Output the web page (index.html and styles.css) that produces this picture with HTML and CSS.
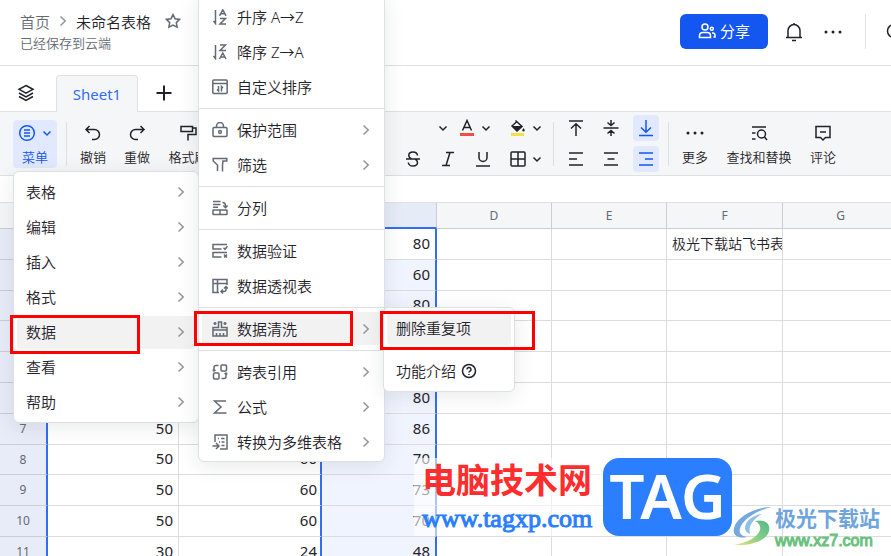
FILE: index.html
```
<!DOCTYPE html>
<html lang="zh-CN">
<head>
    <meta charset="UTF-8">
    <meta name="viewport" content="width=device-width, initial-scale=1.0">
    <title>未命名表格</title>
    <link rel="stylesheet" href="styles.css">
</head>
<body>
    <!-- Shared icons -->
    <svg class="sprite" aria-hidden="true">
        <symbol id="chevron" viewBox="0 0 8 14"><path d="M1.5 2.5 6.2 7l-4.7 4.5"/></symbol>
        <symbol id="caret" viewBox="0 0 12 12"><path d="M2.5 4.5 6 8l3.5-3.5"/></symbol>
    </svg>

    <header class="header">
        <div class="doc">
            <nav class="crumbs">
                <a href="#">首页</a>
                <svg class="chevron" width="8" height="14"><use href="#chevron"/></svg>
                <span class="doc-name">未命名表格</span>
                <button class="plain star" aria-label="收藏">
                    <svg width="16" height="16" viewBox="0 0 16 16"><path d="m8 1.6 2 4.1 4.6.7-3.3 3.2.8 4.5L8 12l-4.1 2.1.8-4.5L1.4 6.4 6 5.7z"/></svg>
                </button>
            </nav>
            <div class="saved">已经保存到云端</div>
        </div>
        <div class="header-actions">
            <button class="share">
                <svg width="18" height="18" viewBox="0 0 18 18"><circle cx="7" cy="5" r="3"/><path d="M1.5 15.5v-1.7c0-2.2 1.5-3.3 3.3-3.3h4.4c1.8 0 3.3 1.1 3.3 3.3v1.7z"/><circle cx="13.8" cy="6.8" r="1.5"/><path d="M14 11h.8c1.4 0 2.2.9 2.2 2.2V15h-1.5"/></svg>
                分享
            </button>
            <button class="plain bell" aria-label="通知">
                <svg width="18" height="20" viewBox="0 0 18 20"><path d="M3 15.5V8.6a6 6 0 0 1 12 0v6.9M1 15.5h16M7 18.5h4M9 2.500V1"/></svg>
            </button>
            <button class="plain dots" aria-label="更多操作">
                <svg class="solid" width="18" height="4" viewBox="0 0 18 4"><circle cx="2" cy="2" r="1.5"/><circle cx="9" cy="2" r="1.5"/><circle cx="16" cy="2" r="1.5"/></svg>
            </button>
            <span class="divider"></span>
            <button class="plain search" aria-label="搜索">
                <svg width="18" height="18" viewBox="0 0 18 18"><circle cx="8" cy="8" r="6.5"/><path d="m13 13 4 4"/></svg>
            </button>
        </div>
    </header>

    <div class="tabs">
        <button class="plain" aria-label="工作表列表">
            <svg width="18" height="18" viewBox="0 0 18 18"><path d="m9 1.500 7 3.800-7 3.800-7-3.800zM2 9l7 3.900L16 9M2 12.500l7 3.900 7-3.900"/></svg>
        </button>
        <button class="tab">Sheet1</button>
        <button class="plain" aria-label="新建工作表">
            <svg class="bold" width="16" height="16" viewBox="0 0 16 16"><path d="M8 .5v15M.5 8h15"/></svg>
        </button>
    </div>

    <div class="toolbar">
        <button class="tool active menu-btn">
            <span class="tool-icon">
                <svg width="18" height="18" viewBox="0 0 18 18"><circle cx="9" cy="9" r="7.300"/><path d="M6 6h6M6 9h6M6 12h6"/></svg>
                <svg width="12" height="12"><use href="#caret"/></svg>
            </span>
            菜单
        </button>
        <span class="divider"></span>
        <button class="tool">
            <span class="tool-icon"><svg width="18" height="18" viewBox="0 0 18 18"><path d="M5.500 2 2 5.500 5.500 9M2.300 5.500h8.200a5 5 0 0 1 0 10H8"/></svg></span>
            撤销
        </button>
        <button class="tool">
            <span class="tool-icon"><svg width="18" height="18" viewBox="0 0 18 18"><path d="M12.500 2 16 5.500 12.500 9M15.700 5.500H7.500a5 5 0 0 0 0 10H10"/></svg></span>
            重做
        </button>
        <button class="tool painter">
            <span class="tool-icon"><svg width="18" height="18" viewBox="0 0 18 18"><path d="M2 2.500h11.500v5H2zM13.500 4H17v6.500H9v6"/></svg></span>
            格式刷
        </button>

        <div class="format">
            <div class="format-row">
                <button class="plain end-small" aria-label="字号"><svg width="12" height="12"><use href="#caret"/></svg></button>
                <button class="plain" aria-label="文字颜色"><svg width="18" height="18" viewBox="0 0 18 18"><path d="M4.500 11.500 9 1.500l4.500 10M6 8.500h6"/><path class="red-line" d="M2 15.500h14"/></svg></button>
                <button class="plain end-wide" aria-label="选择文字颜色"><svg width="12" height="12"><use href="#caret"/></svg></button>
                <button class="plain" aria-label="填充颜色"><svg width="18" height="18" viewBox="0 0 18 18"><path d="m6.500 1.500 6.500 6-5 4.500-5-5 4.500-4"/><path class="ink" d="M3 7h10l-5 5zM14.500 9c1.800 2.500 1.500 3.500 0 3.500s-1.800-1 0-3.500z"/><path class="yellow-line" d="M2 15.500h13"/></svg></button>
                <button class="plain" aria-label="选择填充颜色"><svg width="12" height="12"><use href="#caret"/></svg></button>
            </div>
            <div class="format-row">
                <button class="plain end-wide" aria-label="删除线"><svg width="18" height="18" viewBox="0 0 18 18"><path d="M13.500 5.500C13.200 3.300 11.500 2 9 2 6.500 2 4.800 3.400 4.800 5.300c0 1.700.9 2.800 2.700 3.700M4.300 12.500C4.600 14.700 6.400 16 9 16c2.700 0 4.500-1.400 4.500-3.400 0-1.700-.8-2.800-2.500-3.600M2 9h14"/></svg></button>
                <button class="plain end-wide" aria-label="斜体"><svg width="18" height="18" viewBox="0 0 18 18"><path d="M7 2.500h8M3 15.500h8M11 2.500l-4 13"/></svg></button>
                <button class="plain end-wide" aria-label="下划线"><svg width="18" height="18" viewBox="0 0 18 18"><path d="M5 2v5.500a4 4 0 0 0 8 0V2M2 16h14"/></svg></button>
                <button class="plain" aria-label="边框"><svg width="18" height="18" viewBox="0 0 18 18"><rect x="2" y="2" width="14" height="14" rx="1"/><path d="M9 2v14M2 9h14"/></svg></button>
                <button class="plain" aria-label="选择边框"><svg width="12" height="12"><use href="#caret"/></svg></button>
            </div>
        </div>
        <span class="divider"></span>
        <div class="align">
            <button class="plain" aria-label="顶部对齐"><svg width="18" height="18" viewBox="0 0 18 18"><path d="M2 2h14M9 17V5M4 9.500 9 4.700l5 4.800"/></svg></button>
            <button class="plain" aria-label="垂直居中"><svg width="18" height="18" viewBox="0 0 18 18"><path d="M1.500 9h15M9 1v5M5.500 3.500 9 6.500l3.500-3M9 17v-5M5.500 14.500l3.500-3 3.500 3"/></svg></button>
            <button class="plain active" aria-label="底部对齐"><svg width="18" height="18" viewBox="0 0 18 18"><path d="M2 16.500h14M9 1v12M4 8.500l5 4.800 5-4.800"/></svg></button>
            <button class="plain" aria-label="左对齐"><svg width="18" height="18" viewBox="0 0 18 18"><path d="M2 3h14M2 9h8M2 15h14"/></svg></button>
            <button class="plain" aria-label="水平居中"><svg width="18" height="18" viewBox="0 0 18 18"><path d="M2 3h14M5.500 9h7M2 15h14"/></svg></button>
            <button class="plain active" aria-label="右对齐"><svg width="18" height="18" viewBox="0 0 18 18"><path d="M2 3h14M8 9h8M2 15h14"/></svg></button>
        </div>
        <span class="divider"></span>
        <button class="tool">
            <span class="tool-icon"><svg class="solid" width="18" height="18" viewBox="0 0 18 18"><circle cx="2" cy="9" r="1.5"/><circle cx="9" cy="9" r="1.5"/><circle cx="16" cy="9" r="1.5"/></svg></span>
            更多
        </button>
        <button class="tool wide">
            <span class="tool-icon"><svg width="18" height="18" viewBox="0 0 18 18"><path d="M2 3h14M2 9h3.500M2 15h3.500"/><circle cx="11.500" cy="10" r="4"/><path d="m14.500 13 2.500 3"/></svg></span>
            查找和替换
        </button>
        <button class="tool">
            <span class="tool-icon"><svg width="18" height="18" viewBox="0 0 18 18"><path d="M2 2.500h14v11h-4.500L9 16l-2.500-2.500H2zM6 8h6"/></svg></span>
            评论
        </button>
    </div>
    <div class="formula-bar"></div>

    <main class="grid">
        <table class="sheet">
            <colgroup>
                <col class="col-index"><col class="col-a"><col class="col-b">
                <col class="col-c"><col class="col-c"><col class="col-c">
                <col class="col-f"><col class="col-f">
            </colgroup>
            <thead>
                <tr><th></th><th>A</th><th>B</th><th>C</th><th>D</th><th>E</th><th>F</th><th>G</th></tr>
            </thead>
            <tbody>
                <tr><th>1</th><td>50</td><td>60</td><td>80</td><td></td><td></td><td class="text">极光下载站飞书表格</td><td></td></tr>
                <tr><th>2</th><td>50</td><td>60</td><td>60</td><td></td><td></td><td></td><td></td></tr>
                <tr><th>3</th><td>50</td><td>60</td><td>80</td><td></td><td></td><td></td><td></td></tr>
                <tr><th>4</th><td>50</td><td>60</td><td>80</td><td></td><td></td><td></td><td></td></tr>
                <tr><th>5</th><td>50</td><td>60</td><td>80</td><td></td><td></td><td></td><td></td></tr>
                <tr><th>6</th><td>50</td><td>60</td><td>80</td><td></td><td></td><td></td><td></td></tr>
                <tr><th>7</th><td>50</td><td>60</td><td>86</td><td></td><td></td><td></td><td></td></tr>
                <tr><th>8</th><td>50</td><td>60</td><td>70</td><td></td><td></td><td></td><td></td></tr>
                <tr><th>9</th><td>50</td><td>60</td><td>73</td><td></td><td></td><td></td><td></td></tr>
                <tr><th>10</th><td>50</td><td>60</td><td>70</td><td></td><td></td><td></td><td></td></tr>
                <tr><th>11</th><td>30</td><td>24</td><td>48</td><td></td><td></td><td></td><td></td></tr>
            </tbody>
        </table>
    </main>

    <!-- Main menu -->
    <div class="menu menu-main">
        <button class="item">表格<svg class="chevron" width="8" height="14"><use href="#chevron"/></svg></button>
        <button class="item">编辑<svg class="chevron" width="8" height="14"><use href="#chevron"/></svg></button>
        <button class="item">插入<svg class="chevron" width="8" height="14"><use href="#chevron"/></svg></button>
        <button class="item">格式<svg class="chevron" width="8" height="14"><use href="#chevron"/></svg></button>
        <button class="item current">数据<svg class="chevron" width="8" height="14"><use href="#chevron"/></svg></button>
        <button class="item">查看<svg class="chevron" width="8" height="14"><use href="#chevron"/></svg></button>
        <button class="item">帮助<svg class="chevron" width="8" height="14"><use href="#chevron"/></svg></button>
    </div>

    <!-- Data submenu -->
    <div class="menu menu-data">
        <button class="item">
            <svg width="16" height="16" viewBox="0 0 16 16"><path d="M3.500 1v13.500L1.500 12M7.500 6.800l3.300-6 3.200 6M8.700 4.800h4.200M8 9.500h5.500L8 15h6"/></svg>升序 A→Z
        </button>
        <button class="item">
            <svg width="16" height="16" viewBox="0 0 16 16"><path d="M3.500 1v13.500L1.500 12M8 1h5.500L8 6.500h6M7.500 15l3.300-6 3.200 6M8.700 13h4.200"/></svg>降序 Z→A
        </button>
        <button class="item">
            <svg width="16" height="16" viewBox="0 0 16 16"><rect x=".8" y="1" width="14.400" height="13.500" rx="1"/><path d="M1 4.500h14M6.500 7v5L5 10.500M9.500 12.500v-5L11 9"/></svg>自定义排序
        </button>
        <hr>
        <button class="item">
            <svg width="16" height="16" viewBox="0 0 16 16"><rect x="1" y="5.500" width="14" height="9" rx="1"/><path d="M4.500 5.500V4a3.500 3.500 0 0 1 7 0v1.500"/><circle cx="8" cy="10" r="1.400"/></svg>保护范围
            <svg class="chevron" width="8" height="14"><use href="#chevron"/></svg>
        </button>
        <button class="item">
            <svg width="16" height="16" viewBox="0 0 16 16"><path d="M5.500 14V8L1.200 4V1.500h13.600V4H11L10.500 8v6.500"/></svg>筛选
            <svg class="chevron" width="8" height="14"><use href="#chevron"/></svg>
        </button>
        <hr>
        <button class="item">
            <svg width="16" height="16" viewBox="0 0 16 16"><path d="M1 1.500h7.500M1 4.500h7.500M1 7.300h5M10.500 2.500c2 0 3 1.200 3 3.500v1.500M11.300 5.500l2.200 2.200 2.200-2.200"/><rect x="1" y="10" width="14" height="4.500" rx=".5"/><path d="M8 10v4.500"/></svg>分列
        </button>
        <hr>
        <button class="item">
            <svg width="16" height="16" viewBox="0 0 16 16"><path d="M15 1.500H1v4.500h8.500M15 9.500H1V14h8.500M11.500 4.800l1.500 1.500 2.500-3M12 11.500l3 3M15 11.500l-3 3"/></svg>数据验证
        </button>
        <button class="item">
            <svg width="16" height="16" viewBox="0 0 16 16"><path d="M7 14.500H1v-13h14v5.500M1 5.500h14M5.500 1.500v13M14 9v2.500c0 1.300-.7 2-2 2H9.500M12 10.500l2-2 2 2M11 11.500l-2 2 2 2"/></svg>数据透视表
        </button>
        <hr>
        <button class="item current">
            <svg width="16" height="16" viewBox="0 0 16 16"><path d="M1 9V6.500h5.500V1h3v5.500H15V9M1 9h14v6H1zM4.500 15v-3M8 15v-3M11.500 15v-3M3 1v3M1.500 2.500h3M13 1v3M11.500 2.500h3"/></svg>数据清洗
            <svg class="chevron" width="8" height="14"><use href="#chevron"/></svg>
        </button>
        <hr>
        <button class="item">
            <svg width="16" height="16" viewBox="0 0 16 16"><rect x="9" y="1" width="5.500" height="6" rx="1"/><rect x="1.500" y="9" width="5.500" height="6" rx="1"/><path d="M6.500 1.500H4c-1.300 0-2 .7-2 2V7M.800 5.500 2 7l1.500-1M9.500 14.500H12c1.300 0 2-.7 2-2V9M12.500 10 14 9l1.200 1.500"/></svg>跨表引用
            <svg class="chevron" width="8" height="14"><use href="#chevron"/></svg>
        </button>
        <button class="item">
            <svg width="16" height="16" viewBox="0 0 16 16"><path d="M14 2H2.500L9 8l-6.500 6H14.500"/></svg>公式
            <svg class="chevron" width="8" height="14"><use href="#chevron"/></svg>
        </button>
        <button class="item">
            <svg width="16" height="16" viewBox="0 0 16 16"><path d="M3 8V1h12v14H8M6 4.500h1M9 4.500h3.500M7 8h1M9.500 8h3M9.500 11.500h3M.500 12h6M4 9l3 3-3 3"/></svg>转换为多维表格
            <svg class="chevron" width="8" height="14"><use href="#chevron"/></svg>
        </button>
    </div>

    <!-- Clean up submenu -->
    <div class="menu menu-clean">
        <button class="item current">删除重复项</button>
        <button class="item">功能介绍
            <svg class="help" width="16" height="16" viewBox="0 0 16 16"><circle cx="8" cy="8" r="6.500"/><path d="M6 6.500a2 2 0 1 1 2.800 1.800c-.6.300-.8.600-.8 1.300M8 11v1"/></svg>
        </button>
    </div>

    <!-- Step markers -->
    <div class="marker marker-main"></div>
    <div class="marker marker-data"></div>
    <div class="marker marker-clean"></div>

    <!-- Site badges -->
    <div class="badge-tag">
        <div class="badge-text">
            <div class="badge-name">电脑技术网</div>
            <div class="badge-url">www.tagxp.com</div>
        </div>
        <div class="badge-box">TAG</div>
    </div>
    <div class="badge-xz">
        <svg width="44" height="44" viewBox="0 0 44 44">
            <defs>
                <linearGradient id="swirl" x1="0" y1="1" x2="1" y2="0"><stop offset="0" stop-color="#f2df72"/><stop offset=".5" stop-color="#86ce86"/><stop offset="1" stop-color="#55b88c"/></linearGradient>
            </defs>
            <path fill="#73a9de" d="M41 3C25 3 6 12 3 24c-2 8 5 11 13 9-7-1-9-5-6-11C14 14 27 6 41 3z"/>
            <path fill="#8fc0e8" d="M31 10c-9 1-17 7-17 14 0 3 2 5 5 6-2-8 3-15 12-20z"/>
            <path fill="url(#swirl)" d="M24 17c9-2 16 2 14 10-2 9-17 15-35 14 13-2 24-8 26-15 1-4-1-7-5-9z"/>
        </svg>
        <div>
            <div class="xz-name">极光下载站</div>
            <div class="xz-url">www.xz7.com</div>
        </div>
    </div>
</body>
</html>
```
FILE: styles.css
```
* {
    box-sizing: border-box;
}
body {
    margin: 0;
    height: 100vh;
    overflow: hidden;
    position: relative;
    display: flex;
    flex-direction: column;
    background-color: #fff;
    color: #1f2329;
    font-family: "Noto Sans", "Noto Sans CJK SC", sans-serif;
    font-size: 15px;
    font-weight: 350;
}
button {
    font: inherit;
    color: inherit;
    border: 0;
    padding: 0;
    background: none;
    cursor: pointer;
}
svg {
    display: block;
    flex: none;
    fill: none;
    stroke: currentColor;
    stroke-width: 1.5;
}
.sprite {
    position: absolute;
    width: 0;
    height: 0;
}
.solid {
    fill: currentColor;
    stroke: none;
}
.bold {
    stroke-width: 2;
}
.chevron {
    color: #8f959e;
}
.plain {
    display: flex;
    align-items: center;
    justify-content: center;
}
.divider {
    flex: none;
    width: 1px;
    background-color: #dee0e3;
}

/* Header */
.header {
    flex: none;
    display: flex;
    justify-content: space-between;
    height: 66px;
    padding-left: 20px;
    border-bottom: 1px solid #dee0e3;
}
.doc {
    padding-top: 10px;
}
.crumbs {
    display: flex;
    align-items: center;
    gap: 9px;
    height: 22px;
}
.crumbs a {
    color: #646a73;
    text-decoration: none;
}
.star {
    margin-left: 5px;
    color: #646a73;
}
.saved {
    color: #646a73;
    font-size: 13px;
    line-height: 22px;
}
.header-actions {
    display: flex;
    align-items: center;
    height: 35px;
    margin-top: 14px;
    margin-right: -13px;
}
.header-actions .divider {
    height: 35px;
}
.share {
    display: flex;
    align-items: center;
    justify-content: center;
    gap: 4px;
    width: 88px;
    height: 35px;
    padding-bottom: 2px;
    border-radius: 6px;
    background-color: #1456f0;
    color: #fff;
    font-weight: 400;
}
.bell {
    margin-left: 17px;
}
.dots {
    margin: 0 23px 0 21px;
}
.search {
    margin-left: 20px;
}

/* Sheet tabs */
.tabs {
    flex: none;
    display: flex;
    align-items: flex-end;
    height: 46px;
    padding-left: 17px;
    border-bottom: 1px solid #dee0e3;
}
.tabs .plain {
    height: 36px;
}
.tab {
    width: 82px;
    height: 37px;
    margin: 0 18px -1px 21px;
    border: 1px solid #dee0e3;
    border-bottom: 0;
    border-radius: 4px 4px 0 0;
    background-color: #f5f6f7;
    color: #336df4;
    font-weight: 400;
}

/* Toolbar */
.toolbar {
    flex: none;
    display: flex;
    align-items: center;
    height: 64px;
    padding-left: 13px;
    border-bottom: 1px solid #dee0e3;
    background-color: #f5f6f7;
}
.toolbar .divider {
    height: 44px;
}
.tool {
    flex: none;
    width: 44px;
    height: 48px;
    border-radius: 4px;
    font-size: 13px;
    line-height: 22px;
    white-space: nowrap;
}
.tool-icon {
    display: flex;
    align-items: center;
    justify-content: center;
    gap: 5px;
    height: 26px;
}
.active {
    border-radius: 4px;
    background-color: #e0e9ff;
    color: #1456f0;
}
.menu-btn {
    margin-right: 9px;
}
.menu-btn + .divider {
    margin-right: 4px;
}
.painter {
    width: 58px;
}
.wide {
    width: 66px;
    margin: 0 9px;
}
.format {
    flex: none;
    display: flex;
    flex-direction: column;
    gap: 5px;
    width: 336px;
    padding-right: 10px;
}
.format-row {
    display: flex;
    align-items: center;
    justify-content: flex-end;
    gap: 4px;
    height: 26px;
}
.end-small {
    margin-right: 5px;
}
.end-wide {
    margin-right: 13px;
}
.red-line {
    stroke: #f54a45;
    stroke-width: 3;
}
.yellow-line {
    stroke: #f5e04b;
    stroke-width: 3;
}
.ink {
    fill: currentColor;
    stroke: none;
}
.align {
    flex: none;
    display: grid;
    grid-template-columns: repeat(3, 26px);
    gap: 5px 9px;
    padding: 0 9px;
}
.align .plain {
    height: 26px;
}
.align + .divider {
    margin-right: 4px;
}
.formula-bar {
    flex: none;
    height: 27px;
    border-bottom: 1px solid #dee0e3;
}

/* Spreadsheet */
.grid {
    flex: 1;
    min-height: 0;
    overflow: hidden;
}
.sheet {
    width: 899px;
    table-layout: fixed;
    border-spacing: 0;
}
.col-index { width: 48px; }
.col-a { width: 131px; }
.col-b { width: 143px; }
.col-c { width: 115px; }
.col-f { width: 116px; }
.sheet th,
.sheet td {
    padding: 0 5px 3px;
    border-right: 1px solid #dadce0;
    border-bottom: 1px solid #dadce0;
    font-weight: 400;
    line-height: 20px;
    text-align: right;
    overflow: hidden;
    white-space: nowrap;
}
.sheet th {
    padding-bottom: 0;
    color: #646a73;
    font-size: 12px;
    text-align: center;
}
.sheet thead th {
    height: 26px;
    border-color: #c9cdd4;
    background-color: #f5f6f7;
}
.sheet tbody tr {
    height: 31px;
}
.sheet tbody tr:nth-child(5n+3) {
    height: 30px;
}
.sheet tbody th {
    border-right: 2px solid #336df4;
    border-bottom-color: #c9cdd4;
    background-color: #e8ecf8;
}
.sheet td:nth-child(3),
.sheet td:nth-child(4) {
    border-right: 2px solid #336df4;
}
.sheet td:nth-child(3) {
    padding-right: 3px;
}
.sheet td:nth-child(4) {
    background-color: #f0f4ff;
}
.sheet tr:first-child td:nth-child(4) {
    background-color: #fff;
}
.sheet thead th:nth-child(4) {
    border-bottom: 2px solid #336df4;
    background-color: #e5ecf8;
}
.sheet .text {
    padding: 0 0 0 5px;
    font-size: 14px;
    font-weight: 350;
    text-align: left;
}

/* Menus */
.menu {
    position: absolute;
    padding: 3px;
    border: 1px solid #dee0e3;
    border-radius: 6px;
    background-color: #fff;
    box-shadow: 0 4px 20px rgba(31, 35, 41, 0.1);
}
.menu-main {
    top: 171px;
    left: 13px;
    width: 186px;
}
.menu-data {
    top: -5px;
    left: 198px;
    width: 187px;
}
.menu-clean {
    top: 307px;
    left: 383px;
    width: 132px;
}
.item {
    display: flex;
    align-items: center;
    gap: 9px;
    width: 100%;
    height: 33px;
    margin-top: 1px;
    padding: 0 10px 2px 9px;
    border-radius: 4px;
    text-align: left;
    white-space: nowrap;
}
.item + .item {
    margin-top: 2px;
}
.menu-data .item {
    padding: 0 11px 0 10px;
}
.menu-data .item svg {
    color: #646a73;
}
.item .chevron,
.menu-data .item .chevron {
    margin-left: auto;
    color: #8f959e;
}
.menu-clean .item + .item {
    margin-top: 10px;
}
.menu-clean .item {
    gap: 5px;
}
.current {
    background-color: #f2f2f3;
}
.menu hr {
    height: 1px;
    margin: 5px -3px 4px;
    border: 0;
    background-color: #dee0e3;
}

/* Red frames round the steps */
.marker {
    position: absolute;
    border: 3px solid #f00;
    pointer-events: none;
}
.marker-main {
    top: 315px;
    left: 10px;
    width: 130px;
    height: 39px;
}
.marker-data {
    top: 311px;
    left: 194px;
    width: 159px;
    height: 35px;
}
.marker-clean {
    top: 311px;
    left: 380px;
    width: 155px;
    height: 39px;
}

/* Site badges */
.badge-tag {
    position: absolute;
    top: 458px;
    left: 414px;
    display: flex;
    height: 78px;
}
.badge-text {
    width: 189px;
    padding-left: 8px;
    background-color: rgba(255, 255, 255, 0.6);
}
.badge-name {
    color: #ff2d2d;
    font-size: 34px;
    font-weight: 700;
    line-height: 44px;
}
.badge-url {
    color: #2b7fff;
    font-family: "Liberation Serif", serif;
    font-size: 26px;
    font-weight: 400;
    line-height: 34px;
    -webkit-text-stroke: 1px #2b7fff;
}
.badge-box {
    width: 129px;
    border-radius: 16px;
    background-color: #2b7fff;
    color: #fff;
    font-size: 62px;
    font-weight: 600;
    line-height: 74px;
    text-align: center;
}
.badge-xz {
    position: absolute;
    top: 504px;
    left: 731px;
    display: flex;
}
.badge-xz svg {
    stroke: none;
}
.xz-name {
    color: #6fa5dc;
    font-size: 21px;
    font-weight: 700;
    line-height: 28px;
}
.xz-url {
    color: #69c27d;
    font-family: "Liberation Sans", sans-serif;
    font-size: 16px;
    font-weight: 400;
    line-height: 18px;
    -webkit-text-stroke: 1px #69c27d;
}
```
